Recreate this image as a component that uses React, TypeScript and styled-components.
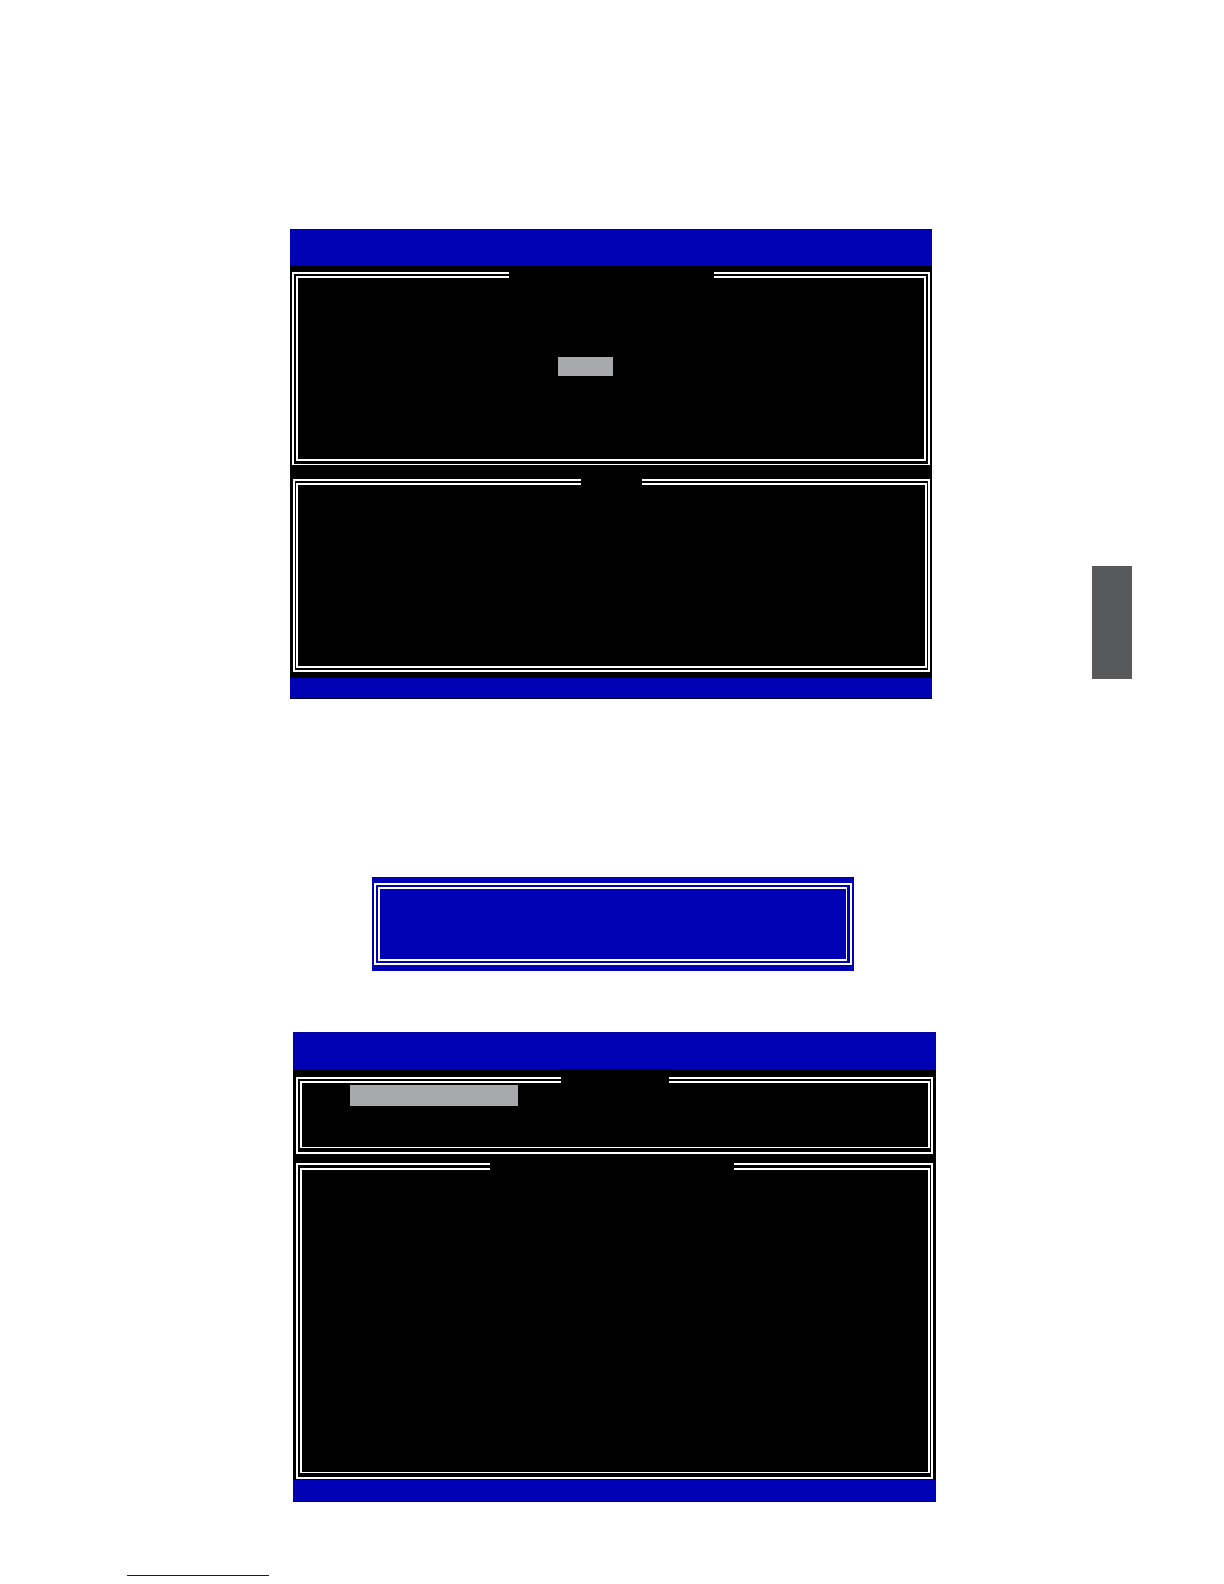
import React from 'react';
import styled, { createGlobalStyle } from 'styled-components';

const blue = '#0000b4';

const GlobalStyle = createGlobalStyle`
  *, *::before, *::after { box-sizing: border-box; }
  body {
    margin: 0;
    background: #fff;
    font-family: "Liberation Mono", monospace;
  }
`;

const Page = styled.div`
  display: grid;
  grid-template-columns: 290px minmax(0, 646px) minmax(0, 1fr);
  padding-top: 229px;
`;

const Column = styled.main`
  grid-column: 2;
  display: flex;
  flex-direction: column;
`;

const Screen = styled.section<{ $width: number; $indent: number }>`
  display: flex;
  flex-direction: column;
  width: 100%;
  max-width: ${(p) => p.$width}px;
  margin-left: ${(p) => p.$indent}px;
  background: #000;
`;

const TitleBar = styled.header<{ $height: number }>`
  height: ${(p) => p.$height}px;
  background: ${blue};
  border-top: 1px solid #00009a;
`;

const StatusBar = styled.footer<{ $height: number }>`
  height: ${(p) => p.$height}px;
  background: ${blue};
  border-bottom: 1px solid #00003c;
`;

const Panels = styled.div<{ $pad: string; $gap: number }>`
  display: flex;
  flex-direction: column;
  gap: ${(p) => p.$gap}px;
  padding: ${(p) => p.$pad};
`;

const Frame = styled.div<{ $height: number; $gap: string; $line?: string; $indent?: number }>`
  position: relative;
  display: flex;
  height: ${(p) => p.$height}px;
  margin-left: ${(p) => p.$indent ?? 0}px;
  padding: ${(p) => p.$gap};
  border: solid #fff;
  border-width: ${(p) => p.$line ?? '2px'};
`;

const FrameBody = styled.div<{ $line?: string; $pad?: string }>`
  flex: 1;
  padding: ${(p) => p.$pad ?? '0'};
  border: solid #fff;
  border-width: ${(p) => p.$line ?? '2px'};
`;

const Caption = styled.h2<{ $left: number; $width: number; $rise?: number }>`
  position: absolute;
  top: -${(p) => p.$rise ?? 8}px;
  left: ${(p) => p.$left}px;
  width: ${(p) => p.$width}px;
  height: 20px;
  margin: 0;
  background: #000;
`;

const Highlight = styled.div<{ $width: number; $height: number }>`
  width: ${(p) => p.$width}px;
  height: ${(p) => p.$height}px;
  background: #a7a9ac;
`;

const Dialog = styled.section`
  width: 100%;
  max-width: 482px;
  margin: 178px 0 61px 82px;
  padding: 6px 2px;
  background: ${blue};
`;

const ChapterTab = styled.aside`
  grid-column: 3;
  justify-self: end;
  width: 40px;
  height: 113px;
  margin: 337px 92px 0 0;
  background: #58595b;
`;

const PageFooter = styled.footer`
  grid-column: 1 / -1;
  padding: 53px 0 8px 127px;
`;

const FooterLink = styled.a`
  display: block;
  width: 142px;
  height: 21px;
  border-bottom: 1px solid #0a0aaa;
`;

export default function App() {
  return (
    <>
      <GlobalStyle />
      <Page>
        <Column>
          <Screen $width={642} $indent={0}>
            <TitleBar $height={37} />
            <Panels $pad="6px 2px" $gap={14}>
              <Frame $height={193} $gap="2px 2px 3px" $line="2px 2px 1px">
                <FrameBody $pad="79px 0 0 260px">
                  <Highlight $width={55} $height={19} />
                </FrameBody>
                <Caption $left={215} $width={205} />
              </Frame>
              <Frame $height={193} $gap="2px 1px 2px 1px" $indent={1}>
                <FrameBody />
                <Caption $left={286} $width={61} />
              </Frame>
            </Panels>
            <StatusBar $height={21} />
          </Screen>

          <Dialog>
            <Frame $height={82} $gap="2px 3px 2px 2px">
              <FrameBody $line="2px 1px 2px 2px" />
            </Frame>
          </Dialog>

          <Screen $width={643} $indent={3}>
            <TitleBar $height={38} />
            <Panels $pad="7px 3px 1px" $gap={9}>
              <Frame $height={77} $gap="2px 1px 4px 2px">
                <FrameBody $line="2px 2px 1px" $pad="2px 0 0 48px">
                  <Highlight $width={168} $height={21} />
                </FrameBody>
                <Caption $left={263} $width={108} $rise={10} />
              </Frame>
              <Frame $height={316} $gap="3px 1px 4px 2px">
                <FrameBody $line="2px 2px 1px" />
                <Caption $left={192} $width={244} />
              </Frame>
            </Panels>
            <StatusBar $height={22} />
          </Screen>
        </Column>
        <ChapterTab />
        <PageFooter>
          <FooterLink href="#" />
        </PageFooter>
      </Page>
    </>
  );
}
